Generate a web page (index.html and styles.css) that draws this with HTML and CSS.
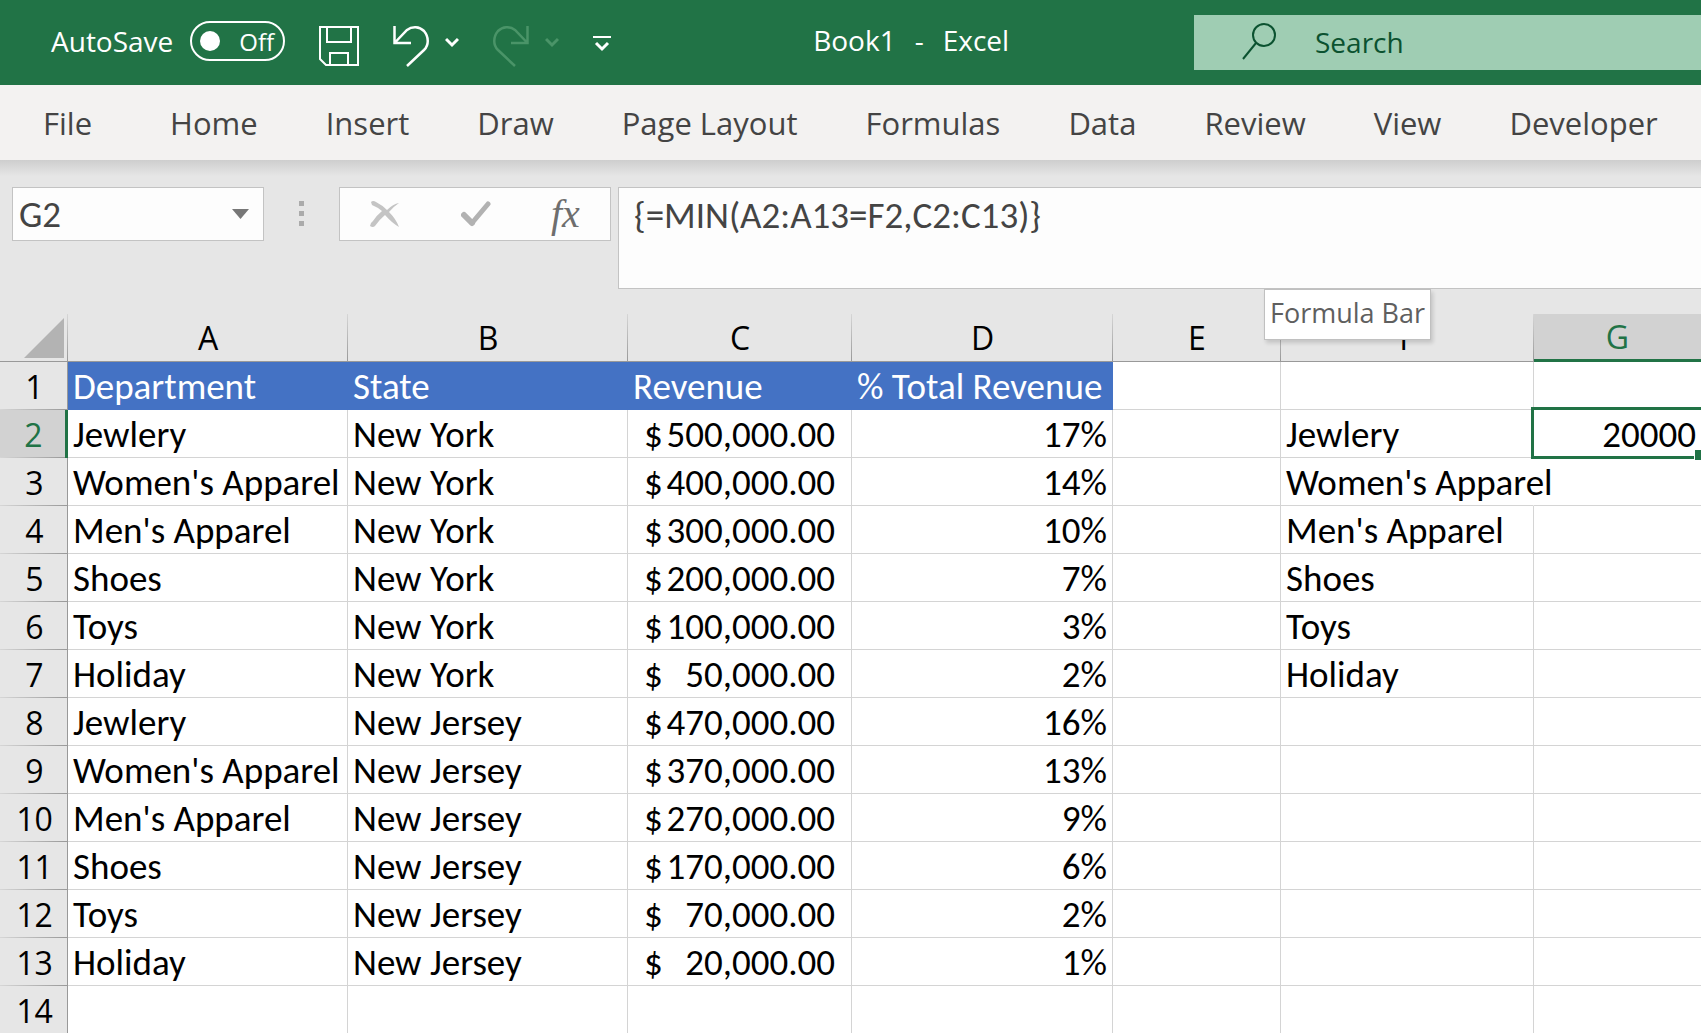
FILE: index.html
```html
<!DOCTYPE html>
<html lang="en">
<head>
<meta charset="utf-8">
<title>Book1 - Excel</title>
<link rel="stylesheet" href="styles.css">
</head>
<body>
<header class="titlebar">
  <div class="quick">
    <label class="autosave">AutoSave
      <span class="pill"><input type="checkbox" class="dot">Off</span>
    </label>
    <button class="icon" aria-label="Save">
      <svg width="40" height="48" viewBox="0 0 40 48" fill="none" stroke="#fff" stroke-width="2"><path d="M1 8H39V46H7L1 40Z"/><path d="M8 8V23H32V8M11 46V34H29V46"/></svg>
    </button>
    <div class="split">
      <button class="icon" aria-label="Undo">
        <svg width="36" height="48" viewBox="0 0 36 48" fill="none" stroke="#fff" stroke-width="2.500"><path d="M1.500 7V24H18M1.500 24L14 11A13 13 0 0 1 31 12C36 18 36 26 31 31L14 47"/></svg>
      </button>
      <button class="icon" aria-label="Undo history">
        <svg width="14" height="48" viewBox="0 0 14 48" fill="none" stroke="#fff" stroke-width="3"><path d="M1 20L7 26L13 20"/></svg>
      </button>
    </div>
    <div class="split">
      <button class="icon" aria-label="Redo" disabled>
        <svg width="36" height="48" viewBox="0 0 36 48" fill="none" stroke="#4a9468" stroke-width="2.500"><path d="M34.500 7V24H18M34.500 24L22 11A13 13 0 0 0 5 12C0 18 0 26 5 31L22 47"/></svg>
      </button>
      <button class="icon" aria-label="Redo history" disabled>
        <svg width="14" height="48" viewBox="0 0 14 48" fill="none" stroke="#4a9468" stroke-width="3"><path d="M1 20L7 26L13 20"/></svg>
      </button>
    </div>
    <button class="icon" aria-label="Customize toolbar">
      <svg width="18" height="48" viewBox="0 0 18 48" fill="none" stroke="#fff"><path stroke-width="2" d="M0 18H18"/><path stroke-width="3" d="M3 24L9 30L15 24"/></svg>
    </button>
  </div>
  <h1 class="title"><span>Book1</span><span>-</span><span>Excel</span></h1>
  <label class="search">
    <svg width="35" height="37" viewBox="0 0 35 37" fill="none" stroke="#0b5230" stroke-width="2"><circle cx="22" cy="12" r="11"/><path d="M14 20L1 36"/></svg>
    <input type="search" placeholder="Search" aria-label="Search">
  </label>
</header>

<nav class="tabs">
  <button class="tab file">File</button>
  <button class="tab">Home</button>
  <button class="tab">Insert</button>
  <button class="tab">Draw</button>
  <button class="tab">Page Layout</button>
  <button class="tab">Formulas</button>
  <button class="tab">Data</button>
  <button class="tab">Review</button>
  <button class="tab">View</button>
  <button class="tab">Developer</button>
</nav>

<section class="formula-row">
  <div class="namebox">
    <input type="text" value="G2" aria-label="Name box">
    <button aria-label="Named ranges"><svg width="17" height="10" viewBox="0 0 17 10"><path fill="#777" d="M0 0H17L8.500 10Z"/></svg></button>
  </div>
  <div class="grip"><i></i><i></i><i></i></div>
  <div class="actions">
    <button aria-label="Cancel">
      <svg width="30" height="26" viewBox="0 0 30 26"><path fill="#c4c4c4" d="M1 1Q3-1 6 1Q12 4 17 9Q23 3 29 2Q23 6 19 11Q26 18 29 26Q22 22 15 14Q9 19 5 25Q3 27 0 25Q0 22 3 20Q7 14 12 10Q7 6 2 4Z"/></svg>
    </button>
    <button aria-label="Enter">
      <svg width="30" height="26" viewBox="0 0 30 26" fill="none" stroke="#b2b2b2" stroke-linecap="round" stroke-linejoin="round"><path stroke-width="6" d="M3 14L11 22"/><path stroke-width="5" d="M11 22L27 3"/></svg>
    </button>
    <button class="fx" aria-label="Insert function">fx</button>
  </div>
  <div class="formula">
    <textarea aria-label="Formula bar" spellcheck="false">{=MIN(A2:A13=F2,C2:C13)}</textarea>
    <div class="tooltip" role="tooltip">Formula Bar</div>
  </div>
</section>

<main class="sheet">
<table>
  <colgroup><col class="c-num"><col class="c-wide"><col class="c-wide"><col class="c-c"><col class="c-d"><col class="c-e"><col class="c-f"><col></colgroup>
  <thead>
    <tr><th class="corner"><svg width="40" height="40" viewBox="0 0 40 40"><path fill="#b3b3b3" d="M40 0V40H0Z"/></svg></th><th>A</th><th>B</th><th>C</th><th>D</th><th>E</th><th>F</th><th class="on">G</th></tr>
  </thead>
  <tbody>
    <tr class="head"><th>1</th><td>Department</td><td>State</td><td>Revenue</td><td>% Total Revenue</td><td></td><td></td><td></td></tr>
    <tr><th class="on">2</th><td>Jewlery</td><td>New York</td><td class="money"><div><span>$</span><span>500,000.00</span></div></td><td class="num">17%</td><td></td><td>Jewlery</td><td class="num selected">20000</td></tr>
    <tr><th>3</th><td>Women's Apparel</td><td>New York</td><td class="money"><div><span>$</span><span>400,000.00</span></div></td><td class="num">14%</td><td></td><td class="spill">Women's Apparel</td><td></td></tr>
    <tr><th>4</th><td>Men's Apparel</td><td>New York</td><td class="money"><div><span>$</span><span>300,000.00</span></div></td><td class="num">10%</td><td></td><td>Men's Apparel</td><td></td></tr>
    <tr><th>5</th><td>Shoes</td><td>New York</td><td class="money"><div><span>$</span><span>200,000.00</span></div></td><td class="num">7%</td><td></td><td>Shoes</td><td></td></tr>
    <tr><th>6</th><td>Toys</td><td>New York</td><td class="money"><div><span>$</span><span>100,000.00</span></div></td><td class="num">3%</td><td></td><td>Toys</td><td></td></tr>
    <tr><th>7</th><td>Holiday</td><td>New York</td><td class="money"><div><span>$</span><span>50,000.00</span></div></td><td class="num">2%</td><td></td><td>Holiday</td><td></td></tr>
    <tr><th>8</th><td>Jewlery</td><td>New Jersey</td><td class="money"><div><span>$</span><span>470,000.00</span></div></td><td class="num">16%</td><td></td><td></td><td></td></tr>
    <tr><th>9</th><td>Women's Apparel</td><td>New Jersey</td><td class="money"><div><span>$</span><span>370,000.00</span></div></td><td class="num">13%</td><td></td><td></td><td></td></tr>
    <tr><th>10</th><td>Men's Apparel</td><td>New Jersey</td><td class="money"><div><span>$</span><span>270,000.00</span></div></td><td class="num">9%</td><td></td><td></td><td></td></tr>
    <tr><th>11</th><td>Shoes</td><td>New Jersey</td><td class="money"><div><span>$</span><span>170,000.00</span></div></td><td class="num">6%</td><td></td><td></td><td></td></tr>
    <tr><th>12</th><td>Toys</td><td>New Jersey</td><td class="money"><div><span>$</span><span>70,000.00</span></div></td><td class="num">2%</td><td></td><td></td><td></td></tr>
    <tr><th>13</th><td>Holiday</td><td>New Jersey</td><td class="money"><div><span>$</span><span>20,000.00</span></div></td><td class="num">1%</td><td></td><td></td><td></td></tr>
    <tr><th>14</th><td></td><td></td><td></td><td></td><td></td><td></td><td></td></tr>
  </tbody>
</table>
</main>
</body>
</html>
```
FILE: styles.css
```css
:root {
  --ui: "Open Sans", "Noto Sans", sans-serif;
  --cell: Carlito, Calibri, Lato, sans-serif;
  --green: #217346;
}
* { box-sizing: border-box; }
body {
  margin: 0;
  height: 100vh;
  display: flex;
  flex-direction: column;
  overflow: hidden;
  background: #e6e6e6;
  font-family: var(--ui);
}
button, input, textarea {
  margin: 0;
  padding: 0;
  border: 0;
  background: none;
  color: inherit;
  font: inherit;
  outline: 0;
}
svg { display: block; flex: none; }

/* Title bar */
.titlebar {
  flex: none;
  display: flex;
  align-items: center;
  height: 85px;
  background: var(--green);
  color: #fff;
  font-size: 28px;
}
.quick {
  display: flex;
  align-items: center;
  gap: 34px;
  padding-left: 51px;
}
.autosave {
  display: flex;
  align-items: center;
  gap: 17px;
  padding-bottom: 3px;
}
.pill {
  display: flex;
  align-items: center;
  gap: 19px;
  width: 95px;
  height: 40px;
  padding-left: 8px;
  border: 2px solid #fff;
  border-radius: 20px;
  font-size: 24px;
}
.dot {
  appearance: none;
  width: 20px;
  height: 20px;
  border-radius: 50%;
  background: #fff;
}
.split { display: flex; gap: 16px; }
.title {
  flex: 1;
  display: flex;
  justify-content: center;
  gap: 19px;
  margin: 0;
  padding: 0 0 6px 17px;
  font-size: 28px;
  font-weight: 400;
}
.search {
  display: flex;
  align-items: center;
  gap: 38px;
  width: 507px;
  height: 55px;
  padding: 0 0 2px 48px;
  background: #9fcdb3;
}
.search input {
  flex: 1;
  min-width: 0;
  color: #0b5230;
}
.search input::placeholder { color: #0b5230; opacity: 1; }

/* Ribbon tabs */
.tabs {
  flex: none;
  display: flex;
  gap: 68px;
  height: 75px;
  padding-left: 43px;
  background: #f3f2f1;
}
.tab {
  color: #444;
  font-size: 31px;
  white-space: nowrap;
}
.file { margin-right: 10px; }

/* Formula bar */
.formula-row {
  flex: none;
  display: flex;
  align-items: flex-start;
  padding: 27px 0 25px 12px;
  background: linear-gradient(#cecece, #e6e6e6 16px);
  color: #444;
}
.namebox {
  display: flex;
  align-items: center;
  width: 252px;
  height: 54px;
  padding: 0 14px 0 6px;
  border: 1px solid #c3c3c3;
  background: #fdfdfd;
  font-family: var(--cell);
  font-size: 37px;
}
.namebox input { flex: 1; min-width: 0; height: 52px; }
.grip {
  display: flex;
  flex-direction: column;
  align-items: center;
  gap: 5px;
  width: 75px;
  padding-top: 14px;
}
.grip i { width: 5px; height: 5px; background: #ababab; }
.actions {
  display: flex;
  align-items: center;
  justify-content: space-around;
  width: 272px;
  height: 54px;
  margin-right: 7px;
  border: 1px solid #c3c3c3;
  background: #fdfdfd;
}
.fx {
  color: #6e6e6e;
  font: italic 40px/40px "Liberation Serif", serif;
}
.formula {
  position: relative;
  flex: 1;
  height: 102px;
  border: 1px solid #c3c3c3;
  border-right: 0;
  background: #fdfdfd;
}
.formula textarea {
  display: block;
  width: 100%;
  height: 100%;
  padding: 8px 15px;
  resize: none;
  font-family: var(--cell);
  font-size: 37px;
  line-height: 40px;
}
.tooltip {
  position: absolute;
  z-index: 2;
  top: 101px;
  left: 645px;
  height: 51px;
  padding: 0 5px;
  border: 1px solid #c0c0c0;
  background: #fff;
  box-shadow: 2px 3px 4px rgba(0, 0, 0, .15);
  color: #5f5f5f;
  font-size: 27px;
  line-height: 45px;
  white-space: nowrap;
}

/* Worksheet */
.sheet { flex: 1; min-height: 0; overflow: hidden; background: #fff; }
table {
  width: 100%;
  table-layout: fixed;
  border-collapse: separate;
  border-spacing: 0;
}
.c-num { width: 68px; }
.c-wide { width: 280px; }
.c-c { width: 224px; }
.c-d { width: 261px; }
.c-e { width: 168px; }
.c-f { width: 253px; }
th {
  height: 48px;
  padding: 1px 0 0;
  background: #e6e6e6;
  font-size: 32px;
  font-weight: 400;
  line-height: 46px;
}
thead th {
  border-bottom: 1px solid #999;
  background: linear-gradient(#d6d6d6, #999) right / 1px 100% no-repeat #e6e6e6;
}
thead th.on {
  border-bottom: 3px solid var(--green);
  background: #d2d2d2;
  color: var(--green);
  line-height: 44px;
}
tbody th {
  padding-left: 2px;
  border-right: 1px solid #999;
  background: linear-gradient(90deg, #d6d6d6, #999) bottom / 100% 1px no-repeat #e6e6e6;
}
tbody th.on {
  border-right: 3px solid var(--green);
  background-color: #d2d2d2;
  color: var(--green);
}
.corner svg { margin-left: 24px; }
td {
  height: 48px;
  padding: 5px 5px 2px;
  border-right: 1px solid #d4d4d4;
  border-bottom: 1px solid #d4d4d4;
  font-family: var(--cell);
  font-size: 37px;
  line-height: 40px;
  white-space: nowrap;
}
td:last-child { border-right: 0; }
.head td:nth-child(-n+5) {
  border-color: #4472c4;
  background: #4472c4;
  color: #fff;
}
.num { text-align: right; }
.money { padding: 5px 16px 2px; }
.money div { display: flex; justify-content: space-between; }
.spill { border-right-color: transparent; }
.selected { position: relative; }
.selected::before {
  content: "";
  position: absolute;
  inset: -3px -3px -2px;
  border: 3px solid var(--green);
}
.selected::after {
  content: "";
  position: absolute;
  right: -3px;
  bottom: -3px;
  width: 9px;
  height: 10px;
  border: solid #fff;
  border-width: 1px 0 0 1px;
  background: var(--green);
}
```
